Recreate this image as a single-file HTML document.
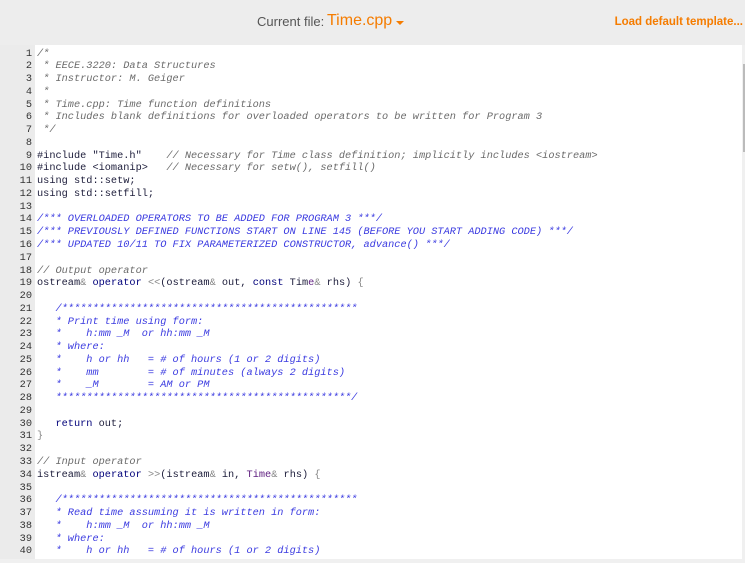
<!DOCTYPE html>
<html><head><meta charset="utf-8"><style>
html,body{margin:0;padding:0;width:745px;height:563px;overflow:hidden;background:#f0f0f0;font-family:"Liberation Sans",sans-serif}
#hdr{position:absolute;left:0;top:0;width:745px;height:45px;background:#ededed}
#cf{position:absolute;left:257px;top:14px;font-size:13px;color:#555}
#fn{position:absolute;left:327px;top:12px;font-size:16px;color:#f57c00}
#caret{position:absolute;left:396px;top:21px;width:0;height:0;border-left:4px solid transparent;border-right:4px solid transparent;border-top:4px solid #f57c00}
#ld{position:absolute;right:2px;top:16px;font-size:11.5px;font-weight:bold;color:#f57c00}
#ed{position:absolute;left:0;top:45px;width:742px;height:514px;background:#fff;overflow:hidden}
#gut{position:absolute;left:0;top:0;width:35px;height:514px;background:#ebebeb}
pre{margin:0;position:absolute;top:2.5px;font-family:"Liberation Mono",monospace;font-size:10.28px;line-height:12.77px;color:#1c1c3a}
#nums{left:0;width:32px;text-align:right;color:#333}
#code{left:37px}
.c{color:#6a6a6a;font-style:italic}
.d{color:#3a3ae0;font-style:italic}
.k{color:#00007a}
.g{color:#888}
.t{color:#602080}
#sb{position:absolute;left:743px;top:64px;width:2px;height:88px;background:#bbb}
</style></head><body>
<div id="hdr"><span id="cf">Current file:</span><span id="fn">Time.cpp</span><div id="caret"></div><span id="ld">Load default template...</span></div>
<div id="ed"><div id="gut"></div>
<pre id="nums">1
2
3
4
5
6
7
8
9
10
11
12
13
14
15
16
17
18
19
20
21
22
23
24
25
26
27
28
29
30
31
32
33
34
35
36
37
38
39
40</pre>
<pre id="code"><span class="c">/*
 * EECE.3220: Data Structures
 * Instructor: M. Geiger
 *
 * Time.cpp: Time function definitions
 * Includes blank definitions for overloaded operators to be written for Program 3
 */</span>

#include "Time.h"    <span class="c">// Necessary for Time class definition; implicitly includes &lt;iostream&gt;</span>
#include &lt;iomanip&gt;   <span class="c">// Necessary for setw(), setfill()</span>
using std::setw;
using std::setfill;

<span class="d">/*** OVERLOADED OPERATORS TO BE ADDED FOR PROGRAM 3 ***/
/*** PREVIOUSLY DEFINED FUNCTIONS START ON LINE 145 (BEFORE YOU START ADDING CODE) ***/
/*** UPDATED 10/11 TO FIX PARAMETERIZED CONSTRUCTOR, advance() ***/</span>

<span class="c">// Output operator</span>
ostream<span class="g">&amp;</span> <span class="k">operator</span> <span class="g">&lt;&lt;</span>(ostream<span class="g">&amp;</span> out, <span class="k">const</span> Tim<span class="t">e</span><span class="g">&amp;</span> rhs) <span class="g">{</span>

   <span class="d">/************************************************
   * Print time using form:
   *    h:mm _M  or hh:mm _M
   * where:
   *    h or hh   = # of hours (1 or 2 digits)
   *    mm        = # of minutes (always 2 digits)
   *    _M        = AM or PM
   ************************************************/</span>

   <span class="k">return</span> out;
<span class="g">}</span>

<span class="c">// Input operator</span>
istream<span class="g">&amp;</span> <span class="k">operator</span> <span class="g">&gt;&gt;</span>(istream<span class="g">&amp;</span> in, <span class="t">Time</span><span class="g">&amp;</span> rhs) <span class="g">{</span>

   <span class="d">/************************************************
   * Read time assuming it is written in form:
   *    h:mm _M  or hh:mm _M
   * where:
   *    h or hh   = # of hours (1 or 2 digits)</span></pre>
</div>
<div id="sb"></div>
</body></html>
